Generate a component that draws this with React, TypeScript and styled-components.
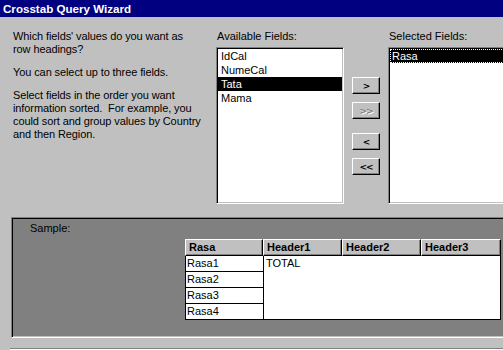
import React from 'react'
import styled, { createGlobalStyle, css } from 'styled-components'

const GlobalStyle = createGlobalStyle`
  html, body {
    margin: 0;
    padding: 0;
    background: #c0c0c0;
  }
  body {
    font-family: "Liberation Sans", Arial, sans-serif;
    font-size: 11px;
    color: #000;
  }
`

const Window = styled.div`
  width: 503px;
  height: 350px;
  background: #c0c0c0;
  overflow: hidden;
  display: flex;
  flex-direction: column;
  & > * {
    flex-shrink: 0;
  }
`

const TitleBar = styled.div`
  height: 17px;
  line-height: 17px;
  background: #000080;
  color: #fff;
  font-weight: bold;
  font-size: 11.6px;
  padding-left: 3px;
  white-space: nowrap;
`

const Top = styled.div`
  display: flex;
  padding-top: 13px;
  height: 174px;
  overflow: hidden;
  & > * {
    flex-shrink: 0;
  }
`

const Intro = styled.div`
  width: 203px;
  margin-left: 13px;
  line-height: 13px;
  white-space: nowrap;
  letter-spacing: -0.1px;
`

const Para = styled.p`
  margin: 0 0 10px;
`

const Column = styled.div<{ $width: number }>`
  width: ${(p) => p.$width}px;
  display: flex;
  flex-direction: column;
`

const Label = styled.div`
  line-height: 13px;
  padding-left: 1px;
  margin-bottom: 4px;
  white-space: nowrap;
`

const sunken = css`
  border-style: solid;
  border-width: 1px;
  border-color: #808080 #ffffff #ffffff #808080;
  box-shadow: inset 1px 1px 0 #000, inset -1px -1px 0 #c0c0c0;
`

const ListBox = styled.div<{ $width: number }>`
  ${sunken};
  width: ${(p) => p.$width}px;
  height: 157px;
  box-sizing: border-box;
  background: #fff;
  padding: 1px;
`

const Item = styled.div<{ $selected?: boolean; $focus?: boolean }>`
  height: 14px;
  line-height: 14px;
  padding-left: 3px;
  white-space: nowrap;
  box-sizing: border-box;
  ${(p) =>
    p.$selected &&
    css`
      background: #000;
      color: #fff;
    `}
  ${(p) =>
    p.$focus &&
    css`
      outline: 1px dotted #fff;
      outline-offset: -1px;
      padding-left: 2px;
    `}
`

const ButtonStack = styled.div`
  display: flex;
  flex-direction: column;
  margin-top: 47px;
  margin-left: 8px;
  width: 28px;
  margin-right: 8px;
`

const Button = styled.div<{ $disabled?: boolean; $gap?: number }>`
  width: 28px;
  height: 17px;
  box-sizing: border-box;
  margin-bottom: ${(p) => p.$gap ?? 8}px;
  background: #c0c0c0;
  border-style: solid;
  border-width: 1px;
  border-color: #fff #000 #000 #fff;
  box-shadow: inset -1px -1px 0 #808080;
  display: flex;
  align-items: center;
  justify-content: center;
  font-family: "DejaVu Sans", sans-serif;
  font-weight: bold;
  font-size: 9px;
  letter-spacing: -1px;
  color: ${(p) => (p.$disabled ? '#808080' : '#000')};
  text-shadow: ${(p) => (p.$disabled ? '1px 1px 0 #fff' : 'none')};
`

const Panel = styled.div`
  ${sunken};
  margin-top: 13px;
  margin-left: 11px;
  width: 520px;
  height: 121px;
  box-sizing: border-box;
  background: #808080;
  padding: 4px 0 0 18px;
`

const SampleLabel = styled.div`
  line-height: 13px;
  margin-bottom: 4px;
`

const Grid = styled.div`
  margin-left: 155px;
  width: 316px;
  display: grid;
  grid-template-columns: 78px 79px 79px 80px;
`

const HeaderCell = styled.div`
  height: 17px;
  box-sizing: border-box;
  background: #c0c0c0;
  border-style: solid;
  border-width: 1px;
  border-color: #fff #000 #000 #fff;
  box-shadow: inset -1px -1px 0 #808080;
  font-weight: bold;
  line-height: 14px;
  padding-left: 3px;
  white-space: nowrap;
`

const Body = styled.div`
  grid-column: 1 / 5;
  display: grid;
  grid-template-columns: 78px 1fr;
  background: #fff;
  border: 1px solid #000;
  border-top: none;
`

const RowHeads = styled.div`
  display: flex;
  flex-direction: column;
  border-right: 1px solid #000;
`

const RowHead = styled.div`
  height: 16px;
  line-height: 15px;
  padding-left: 1px;
  box-sizing: border-box;
  border-bottom: 1px solid #000;
  &:last-child {
    border-bottom: none;
    height: 15px;
  }
`

const Values = styled.div`
  line-height: 15px;
  padding-left: 2px;
`

const Separator = styled.div`
  margin-top: 10px;
  margin-left: 10px;
  height: 0;
  border-top: 1px solid #808080;
  border-bottom: 1px solid #fff;
`

const available = ['IdCal', 'NumeCal', 'Tata', 'Mama']
const rows = ['Rasa1', 'Rasa2', 'Rasa3', 'Rasa4']
const headers = ['Rasa', 'Header1', 'Header2', 'Header3']

const App = () => {
  return (
    <Window>
      <GlobalStyle />
      <TitleBar>Crosstab Query Wizard</TitleBar>
      <Top>
        <Intro>
          <Para>
            Which fields' values do you want as
            <br />
            row headings?
          </Para>
          <Para>You can select up to three fields.</Para>
          <Para>
            Select fields in the order you want
            <br />
            information sorted.&nbsp; For example, you
            <br />
            could sort and group values by Country
            <br />
            and then Region.
          </Para>
        </Intro>
        <Column $width={128}>
          <Label>Available Fields:</Label>
          <ListBox $width={128}>
            {available.map((name) => (
              <Item key={name} $selected={name === 'Tata'}>
                {name}
              </Item>
            ))}
          </ListBox>
        </Column>
        <ButtonStack>
          <Button>&gt;</Button>
          <Button $disabled $gap={14}>
            &gt;&gt;
          </Button>
          <Button>&lt;</Button>
          <Button>&lt;&lt;</Button>
        </ButtonStack>
        <Column $width={130}>
          <Label>Selected Fields:</Label>
          <ListBox $width={130}>
            <Item $selected $focus>
              Rasa
            </Item>
          </ListBox>
        </Column>
      </Top>
      <Panel>
        <SampleLabel>Sample:</SampleLabel>
        <Grid>
          {headers.map((h) => (
            <HeaderCell key={h}>{h}</HeaderCell>
          ))}
          <Body>
            <RowHeads>
              {rows.map((r) => (
                <RowHead key={r}>{r}</RowHead>
              ))}
            </RowHeads>
            <Values>TOTAL</Values>
          </Body>
        </Grid>
      </Panel>
      <Separator />
    </Window>
  )
}

export default App
